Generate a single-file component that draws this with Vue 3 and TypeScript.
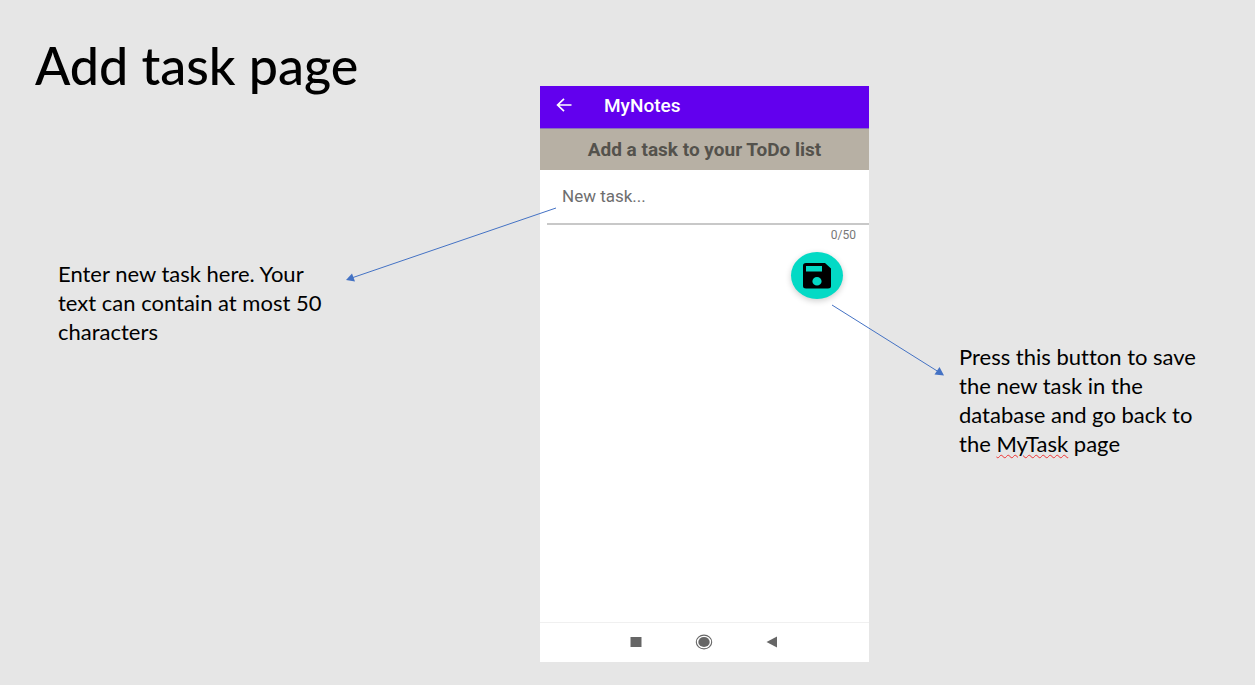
<script setup lang="ts">
import { computed, ref } from 'vue'

const maxLength = 50
const task = ref<string>('')
const counter = computed<string>(() => `${task.value.length}/${maxLength}`)
</script>

<template>
  <main class="slide">
    <section class="left">
      <h1>Add task page</h1>
      <p class="note">Enter new task here. Your text can contain at most 50 characters</p>
    </section>

    <section class="phone">
      <header class="appbar">
        <button class="plain" type="button" aria-label="Back">
          <svg width="16" height="14" viewBox="0 0 16 14" fill="none" stroke="#fff" stroke-width="1.7">
            <path d="M15.5 7H1.6M8 .9 1.6 7 8 13.1" />
          </svg>
        </button>
        <span class="app-name">MyNotes</span>
      </header>
      <h2>Add a task to your ToDo list</h2>
      <form class="form" @submit.prevent>
        <input v-model="task" type="text" :maxlength="maxLength" placeholder="New task..." aria-label="New task" />
        <output class="counter">{{ counter }}</output>
        <button class="save" type="submit" aria-label="Save task">
          <svg width="28" height="26" viewBox="0 0 28 26">
            <path
              fill="#000"
              fill-rule="evenodd"
              d="M3 0H22L28 5.500V23Q28 25.500 25 25.500H3Q0 25.500 0 23V2.700Q0 0 3 0ZM3 3V8.500H19V3ZM14 14A4.600 4.300 0 1 0 14 22.600A4.600 4.300 0 1 0 14 14Z"
            />
          </svg>
        </button>
      </form>
      <nav class="navbar">
        <button class="plain" type="button" aria-label="Recent apps">
          <svg width="18" height="18" viewBox="0 0 18 18"><path fill="#666" d="M3.500 4H14.500V14H3.500Z" /></svg>
        </button>
        <button class="plain" type="button" aria-label="Home">
          <svg width="18" height="18" viewBox="0 0 18 18">
            <ellipse cx="9" cy="9" rx="7.700" ry="6.900" fill="none" stroke="#666" stroke-width="1.100" />
            <ellipse cx="9" cy="9" rx="5.700" ry="5.100" fill="#666" />
          </svg>
        </button>
        <button class="plain" type="button" aria-label="Previous screen">
          <svg width="18" height="18" viewBox="0 0 18 18"><path fill="#666" d="M14 3.500V14.500L3.500 9Z" /></svg>
        </button>
      </nav>

      <svg class="arrow arrow-input" width="212" height="80" viewBox="0 0 212 80" aria-hidden="true">
        <path d="M211 4 8 73.500" fill="none" stroke="#4472c4" />
        <path d="M1 76 7 69.500 10 77.500Z" fill="#4472c4" />
      </svg>
      <svg class="arrow arrow-save" width="114" height="74" viewBox="0 0 114 74" aria-hidden="true">
        <path d="M1 1 107 67.500" fill="none" stroke="#4472c4" />
        <path d="M113 71.500 108.500 63 103.500 70.500Z" fill="#4472c4" />
      </svg>
    </section>

    <section class="right">
      <p class="note">
        Press this button to save the new task in the database and go back to the
        <span class="misspelt">MyTask</span> page
      </p>
    </section>
  </main>
</template>

<style>
body {
  margin: 0;
  background: #e6e6e6;
}
</style>

<style scoped>
.slide {
  box-sizing: border-box;
  min-height: 100vh;
  display: grid;
  grid-template-columns: minmax(0, 540fr) minmax(0, 329fr) minmax(0, 386fr);
  background: #e6e6e6;
  color: #000;
  font-family: Lato, "Liberation Sans", sans-serif;
  font-variant-ligatures: no-common-ligatures;
}
.left {
  padding: 31px 208px 0 35px;
}
h1 {
  margin: 0;
  font-size: 52px;
  line-height: 68px;
  font-weight: 500;
  white-space: nowrap;
}
.note {
  margin: 0;
  font-size: 22px;
  line-height: 29px;
}
.left .note {
  margin-top: 160px;
  padding-left: 23px;
}
.right {
  padding: 342px 48px 0 90px;
}
.misspelt {
  text-decoration: underline wavy #e33 1px;
  text-underline-offset: 2px;
}
.phone {
  position: relative;
  display: flex;
  flex-direction: column;
  min-height: 576px;
  margin: 86px 0 23px;
  background: #fff;
  font-family: Roboto, "Liberation Sans", sans-serif;
}
.plain {
  display: flex;
  padding: 0;
  border: 0;
  background: none;
}
.appbar {
  display: flex;
  align-items: center;
  gap: 32px;
  height: 42px;
  padding: 0 16px;
  background: #6200ee;
  color: #fff;
}
.appbar .plain {
  padding-bottom: 4px;
}
.app-name {
  font-size: 19px;
  line-height: 20px;
  font-weight: 500;
  padding-bottom: 2px;
}
h2 {
  margin: 0;
  border-top: 1px solid #8b72b8;
  background: #b7b0a4;
  color: #54524c;
  font-size: 19px;
  line-height: 41px;
  font-weight: 700;
  text-align: center;
  white-space: nowrap;
}
.form {
  flex: 1;
  display: flex;
  flex-direction: column;
}
input {
  height: 55px;
  box-sizing: border-box;
  margin-left: 7px;
  padding: 0 15px 2px;
  border: 0;
  border-bottom: 2px solid #c8c8c8;
  background: none;
  color: #222;
  font: 17px/20px Roboto, "Liberation Sans", sans-serif;
  outline: 0;
}
input::placeholder {
  color: #6e6e6e;
  opacity: 1;
}
.counter {
  align-self: flex-end;
  margin: 3px 13px 0 0;
  color: #777;
  font-size: 12px;
  line-height: 14px;
}
.save {
  align-self: flex-end;
  display: flex;
  align-items: center;
  justify-content: center;
  width: 52px;
  height: 47px;
  margin: 10px 26px 0 0;
  padding: 0;
  border: 0;
  border-radius: 50%;
  background: #03dac5;
  box-shadow: 0 2px 6px rgba(0, 0, 0, 0.2);
}
.navbar {
  box-sizing: border-box;
  display: flex;
  align-items: center;
  justify-content: center;
  gap: 50px;
  height: 40px;
  padding: 0 2px 2px 0;
  border-top: 1px solid #f0f0f0;
}
.arrow {
  position: absolute;
}
.arrow-input {
  top: 118px;
  left: -195px;
}
.arrow-save {
  top: 218px;
  right: -76px;
}
</style>
